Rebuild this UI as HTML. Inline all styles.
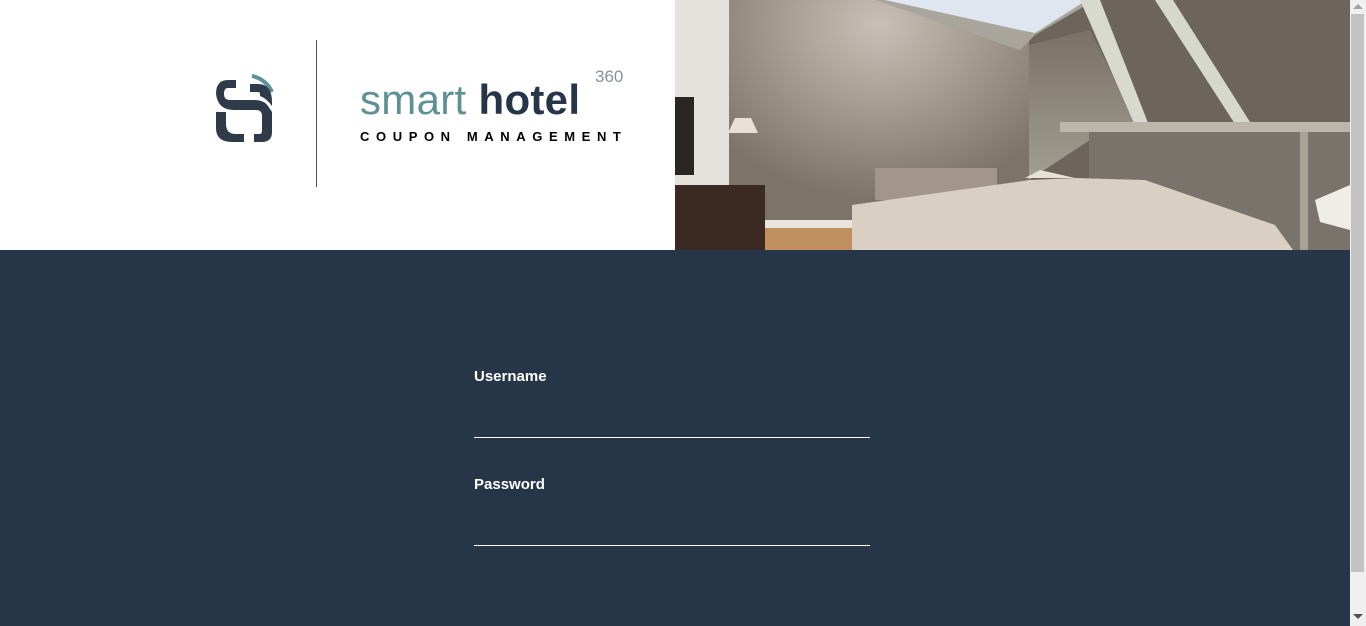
<!DOCTYPE html>
<html><head><meta charset="utf-8"><style>
html,body{margin:0;padding:0;width:1366px;height:626px;overflow:hidden;background:#fff;font-family:"Liberation Sans",sans-serif}
.top{position:absolute;left:0;top:0;width:675px;height:250px;background:#fff}
.photo{position:absolute;left:675px;top:0;width:675px;height:250px}
.bottom{position:absolute;left:0;top:250px;width:1350px;height:376px;background:#263547}
.vline{position:absolute;left:316px;top:40px;width:1px;height:147px;background:#555}
.brand{position:absolute;left:360px;top:75px;font-size:42px;letter-spacing:0.3px;line-height:50px;white-space:nowrap}
.brand .s{color:#5d9196;font-weight:300}
.brand .h{color:#263547;font-weight:bold}
.n360{position:absolute;left:595px;top:67px;font-size:17px;color:#8a9199}
.cm{position:absolute;left:360px;top:129px;font-size:13px;font-weight:bold;letter-spacing:6.6px;color:#000;white-space:nowrap}
.lbl{position:absolute;left:474px;color:#fff;font-weight:bold;font-size:15px}
.ln{position:absolute;left:474px;width:396px;height:1px;background:#fff}
.sb{position:absolute;left:1350px;top:0;width:16px;height:626px;background:#f0f0f0}
.th{position:absolute;left:1351px;top:14px;width:13px;height:558px;background:#c2c2c2}
</style></head><body>
<div class="top">
<svg style="position:absolute;left:214px;top:72px" width="64" height="72" viewBox="0 0 64 72">
<path d="M38 4 A28 28 0 0 1 58 20" fill="none" stroke="#5d9196" stroke-width="4"/>
<path d="M14 8 H22 V16 H14 Q10 16 10 22 Q10 28 16 28 H40 Q50 28 54 34 L58 40 V60 Q58 70 48 70 H40 V62 H46 Q48 62 48 58 V44 Q48 38 42 38 H20 Q4 38 2 22 Q2 8 14 8 Z" fill="#2f3b4a"/>
<path d="M2 40 H12 V52 Q12 62 22 62 H30 V70 H18 Q2 70 2 56 Z" fill="#2f3b4a"/>
<path d="M36 12 H44 Q58 12 58 30 V34 Q52 26 46 24 V22 Q46 20 44 20 H36 Z" fill="#2f3b4a"/>
</svg>
<div class="vline"></div>
<div class="brand"><span class="s">smart</span> <span class="h">hotel</span></div>
<div class="n360">360</div>
<div class="cm">COUPON MANAGEMENT</div>
</div>
<svg class="photo" viewBox="0 0 675 250" preserveAspectRatio="none">
<defs>
<radialGradient id="g1" cx="0.5" cy="0.1" r="0.7"><stop offset="0" stop-color="#c8c0b6"/><stop offset="1" stop-color="#7e7369"/></radialGradient>
<linearGradient id="g2" x1="0" y1="0" x2="0" y2="1"><stop offset="0" stop-color="#7a7166"/><stop offset="1" stop-color="#a39d92"/></linearGradient>
</defs>
<rect width="675" height="250" fill="#6d655c"/>
<rect x="0" y="0" width="54" height="250" fill="#e5e2dd"/>
<rect x="54" y="0" width="300" height="250" fill="url(#g1)"/>
<polygon points="354,45 415,30 470,140 415,140 354,180" fill="url(#g2)"/>
<polygon points="200,0 420,0 360,35 345,50" fill="#aaa59c"/>
<polygon points="210,0 412,0 360,33 345,30" fill="#dfe6f0"/>
<polygon points="405,0 425,0 475,128 462,130" fill="#d8d9cf"/>
<polygon points="480,0 498,0 575,122 560,124" fill="#d6d8cc"/>
<rect x="385" y="122" width="290" height="10" fill="#bdb6aa"/>
<rect x="414" y="132" width="261" height="118" fill="#7a736b"/>
<rect x="625" y="132" width="8" height="118" fill="#a8a296"/>
<rect x="0" y="97" width="19" height="78" fill="#2a2624"/>
<polygon points="53,133 83,133 76,118 60,118" fill="#e8e0d6"/>
<rect x="200" y="168" width="122" height="32" fill="#a2958a"/>
<rect x="75" y="225" width="105" height="25" fill="#c08f5f"/>
<rect x="86" y="220" width="95" height="8" fill="#e8e4de"/>
<rect x="0" y="185" width="90" height="65" fill="#3a2a22"/>
<polygon points="365,170 400,178 350,178" fill="#e8e2d4"/>
<polygon points="177,205 355,180 400,178 470,180 600,225 618,250 177,250" fill="#d9d0c3"/>
<polygon points="640,200 675,185 675,230 645,222" fill="#f0ede6"/>
</svg>
<div class="bottom"></div>
<div class="lbl" style="top:368px">Username</div>
<div class="ln" style="top:437px"></div>
<div class="lbl" style="top:476px">Password</div>
<div class="ln" style="top:545px"></div>
<div class="sb"></div><div class="th"></div>
<div style="position:absolute;left:1353px;top:4px;width:0;height:0;border-left:5px solid transparent;border-right:5px solid transparent;border-bottom:5px solid #a3a3a3"></div>
<div style="position:absolute;left:1353px;top:614px;width:0;height:0;border-left:5px solid transparent;border-right:5px solid transparent;border-top:5px solid #505050"></div>
</body></html>
